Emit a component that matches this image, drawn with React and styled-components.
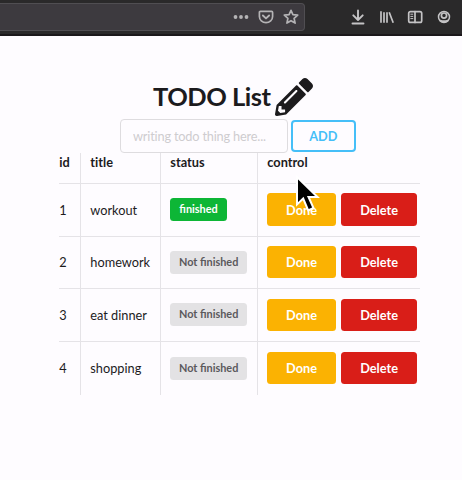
import React from 'react';
import styled, { createGlobalStyle } from 'styled-components';

const GlobalStyle = createGlobalStyle`
  * { box-sizing: border-box; }
  body {
    margin: 0;
    background: #fefcff;
    color: #1c1b1d;
    font-family: Lato, sans-serif;
    font-size: 12.75px;
    overflow: hidden;
  }
`;

const Page = styled.div`
  position: relative;
  width: 462px;
  height: 480px;
  overflow: hidden;
`;

const Toolbar = styled.div`
  height: 36px;
  display: flex;
  align-items: flex-start;
  padding-top: 3px;
  background: #2a292a;
  border-bottom: 2px solid #1b181b;
`;

const AddressBar = styled.div`
  width: 305px;
  height: 28px;
  display: flex;
  align-items: center;
  justify-content: flex-end;
  gap: 9px;
  padding-right: 5px;
  background: #3d3a3f;
  border: 1px solid #504e52;
  border-left: 0;
  border-radius: 0 4px 4px 0;
  color: #b4b3b5;
`;

const BrowserActions = styled.div`
  flex: 1;
  height: 28px;
  display: flex;
  align-items: center;
  justify-content: flex-end;
  gap: 13px;
  padding-right: 10px;
  color: #c4c3c5;
`;

const Glyph = styled.svg`
  width: 16px;
  height: 16px;
  display: block;
  fill: none;
  stroke: currentColor;
  stroke-width: 1.7;
  stroke-linecap: round;
  stroke-linejoin: round;
`;

const Content = styled.main`
  padding-top: 42px;
`;

const Title = styled.h1`
  display: flex;
  align-items: flex-start;
  height: 39px;
  margin: 0 0 2px 153px;
  gap: 4px;
  font-size: 25.5px;
  font-weight: 700;
  line-height: 36px;
  letter-spacing: -0.5px;
  white-space: nowrap;
`;

const TitleText = styled.span`
  width: 118px;
`;

const Pencil = styled.svg`
  width: 38px;
  height: 38px;
  fill: #1c1b1d;
`;

const Form = styled.form`
  display: flex;
  align-items: flex-start;
  gap: 2.5px;
  height: 34px;
  margin-left: 120px;
`;

const TextInput = styled.input`
  width: 168px;
  height: 34px;
  padding: 0 12px;
  border: 1px solid #dedcdf;
  border-radius: 4px;
  background: #fefcff;
  color: #1c1b1d;
  font: 400 12.75px Lato, sans-serif;
  letter-spacing: -0.18px;
  outline: none;
  &::placeholder { color: #cecccf; opacity: 1; }
`;

const AddButton = styled.button`
  width: 65.5px;
  height: 32px;
  margin-top: 1px;
  padding: 0;
  border: 2px solid #45bff8;
  border-radius: 4px;
  background: #fefcff;
  color: #45bff8;
  font: 700 12.75px Lato, sans-serif;
`;

const Table = styled.div`
  width: 361px;
  margin-left: 59px;
`;

const Row = styled.div`
  display: grid;
  grid-template-columns: 22px 80px 97px 162px;
  height: ${(p) => (p.$head ? '31px' : '52.7px')};
  border-bottom: ${(p) => (p.$last ? '0' : '1px solid #e5e3e7')};
  font-weight: ${(p) => (p.$head ? 700 : 400)};
`;

const Cell = styled.div`
  display: flex;
  align-items: center;
  gap: 5.5px;
  padding-left: ${(p) => (p.$first ? '0.3px' : '9.3px')};
  padding-bottom: ${(p) => (p.$head ? '12px' : '0.6px')};
  border-right: ${(p) => (p.$last ? '0' : '1px solid #e5e3e7')};
  font-feature-settings: ${(p) => (p.$head ? '"liga" 0' : 'normal')};
  white-space: nowrap;
`;

const Label = styled.span`
  width: ${(p) => (p.$finished ? '56.5px' : '76.7px')};
  height: 23px;
  border-radius: 3.5px;
  background: ${(p) => (p.$finished ? '#0db636' : '#e3e2e4')};
  color: ${(p) => (p.$finished ? '#fff' : '#5b595c')};
  font-size: 10.9px;
  font-weight: 700;
  line-height: 22.5px;
  text-align: center;
`;

const ActionButton = styled.button`
  flex: none;
  width: ${(p) => (p.$danger ? '75.5px' : '68.5px')};
  height: 32.5px;
  padding: 0;
  border: 0;
  border-radius: 3.5px;
  background: ${(p) => (p.$danger ? '#d91e18' : '#fbb202')};
  color: #fff;
  font: 700 12.75px Lato, sans-serif;
`;

const Cursor = styled.svg`
  position: absolute;
  left: 293px;
  top: 172px;
  width: 28px;
  height: 42px;
`;

const todos = [
  { id: 1, title: 'workout', finished: true },
  { id: 2, title: 'homework', finished: false },
  { id: 3, title: 'eat dinner', finished: false },
  { id: 4, title: 'shopping', finished: false },
];

function BrowserBar() {
  return (
    <Toolbar>
      <AddressBar>
        <Glyph viewBox="0 0 16 16">
          <g fill="currentColor" stroke="none">
            <circle cx="2.5" cy="8" r="1.9" />
            <circle cx="8" cy="8" r="1.9" />
            <circle cx="13.5" cy="8" r="1.9" />
          </g>
        </Glyph>
        <Glyph viewBox="0 0 16 16">
          <path d="M2.4 2.4h11.200c.6 0 1 .4 1 1v4c0 3.500-3 6.200-6.600 6.200S1.400 10.900 1.400 7.400v-4c0-.6.4-1 1-1z" />
          <path d="M4.900 6.500 8 9.400l3.100-2.900" strokeWidth="1.900" />
        </Glyph>
        <Glyph viewBox="0 0 16 16">
          <path d="m8 1.300 1.900 4.300 4.800.5-3.600 3.200 1 4.800L8 11.700l-4.100 2.400 1-4.800-3.600-3.200 4.800-.5z" />
        </Glyph>
      </AddressBar>
      <BrowserActions>
        <Glyph viewBox="0 0 16 16">
          <path d="M9 1.500v9M4.300 6.300 9 11l4.700-4.700M3.500 14.500h11" strokeWidth="1.900" />
        </Glyph>
        <Glyph viewBox="0 0 16 16">
          <path d="M3 2.200v11.600M6 3.200v10.600M9 3.200v10.600M11.200 3.200l4 10.600" strokeLinecap="butt" />
        </Glyph>
        <Glyph viewBox="0 0 16 16">
          <rect x="1.700" y="2.600" width="13" height="10.800" rx="1.700" />
          <path d="M8 2.600v10.800" />
          <path d="M3.800 5.200h2M3.800 7.400h2M3.800 9.600h2" strokeWidth="1" />
        </Glyph>
        <Glyph viewBox="0 0 16 16">
          <circle cx="8" cy="8" r="5.500" strokeWidth="1.500" />
          <circle cx="8" cy="6.600" r="2.600" />
          <path d="M3 9.700c1.700 2 8.300 2 10 0-1 5.200-9 5.200-10 0z" fill="currentColor" stroke="none" />
        </Glyph>
      </BrowserActions>
    </Toolbar>
  );
}

export default function App() {
  return (
    <Page>
      <GlobalStyle />
      <BrowserBar />
      <Content>
        <Title>
          <TitleText>TODO List</TitleText>
          <Pencil viewBox="0 0 512 512">
            <path
              fillRule="evenodd"
              d="M497.900 142.100l-46.100 46.100c-4.700 4.700-12.300 4.700-17 0l-111-111c-4.700-4.700-4.700-12.300 0-17l46.100-46.100c18.700-18.700 49.100-18.700 67.900 0l60.100 60.100c18.800 18.700 18.800 49.100 0 67.900zM284.200 99.800L21.600 362.400.4 483.900c-2.900 16.400 11.400 30.600 27.800 27.800l121.500-21.300 262.600-262.600c4.700-4.700 4.700-12.300 0-17l-111-111c-4.800-4.700-12.400-4.700-17.100 0zM124.100 339.900c-5.500-5.500-5.500-14.300 0-19.800l154-154c5.500-5.500 14.300-5.500 19.800 0s5.500 14.300 0 19.800l-154 154c-5.500 5.500-14.300 5.500-19.800 0zM88 424h48v36.300l-64.500 11.300-31.100-31.100L51.700 376H88v48z"
            />
          </Pencil>
        </Title>
        <Form onSubmit={(e) => e.preventDefault()}>
          <TextInput placeholder="writing todo thing here..." />
          <AddButton type="button">ADD</AddButton>
        </Form>
        <Table>
          <Row $head>
            <Cell $head $first>id</Cell>
            <Cell $head>title</Cell>
            <Cell $head>status</Cell>
            <Cell $head $last>control</Cell>
          </Row>
          {todos.map((todo, i) => (
            <Row key={todo.id} $last={i === todos.length - 1}>
              <Cell $first>{todo.id}</Cell>
              <Cell>{todo.title}</Cell>
              <Cell>
                <Label $finished={todo.finished}>{todo.finished ? 'finished' : 'Not finished'}</Label>
              </Cell>
              <Cell $last>
                <ActionButton>Done</ActionButton>
                <ActionButton $danger>Delete</ActionButton>
              </Cell>
            </Row>
          ))}
        </Table>
      </Content>
      <Cursor viewBox="0 0 28 42">
        <path
          d="M4 5v27.500l6.200-6 5 12 5.300-2.500-5-11H24.500z"
          fill="#000"
          stroke="#fff"
          strokeWidth="2"
        />
      </Cursor>
    </Page>
  );
}
